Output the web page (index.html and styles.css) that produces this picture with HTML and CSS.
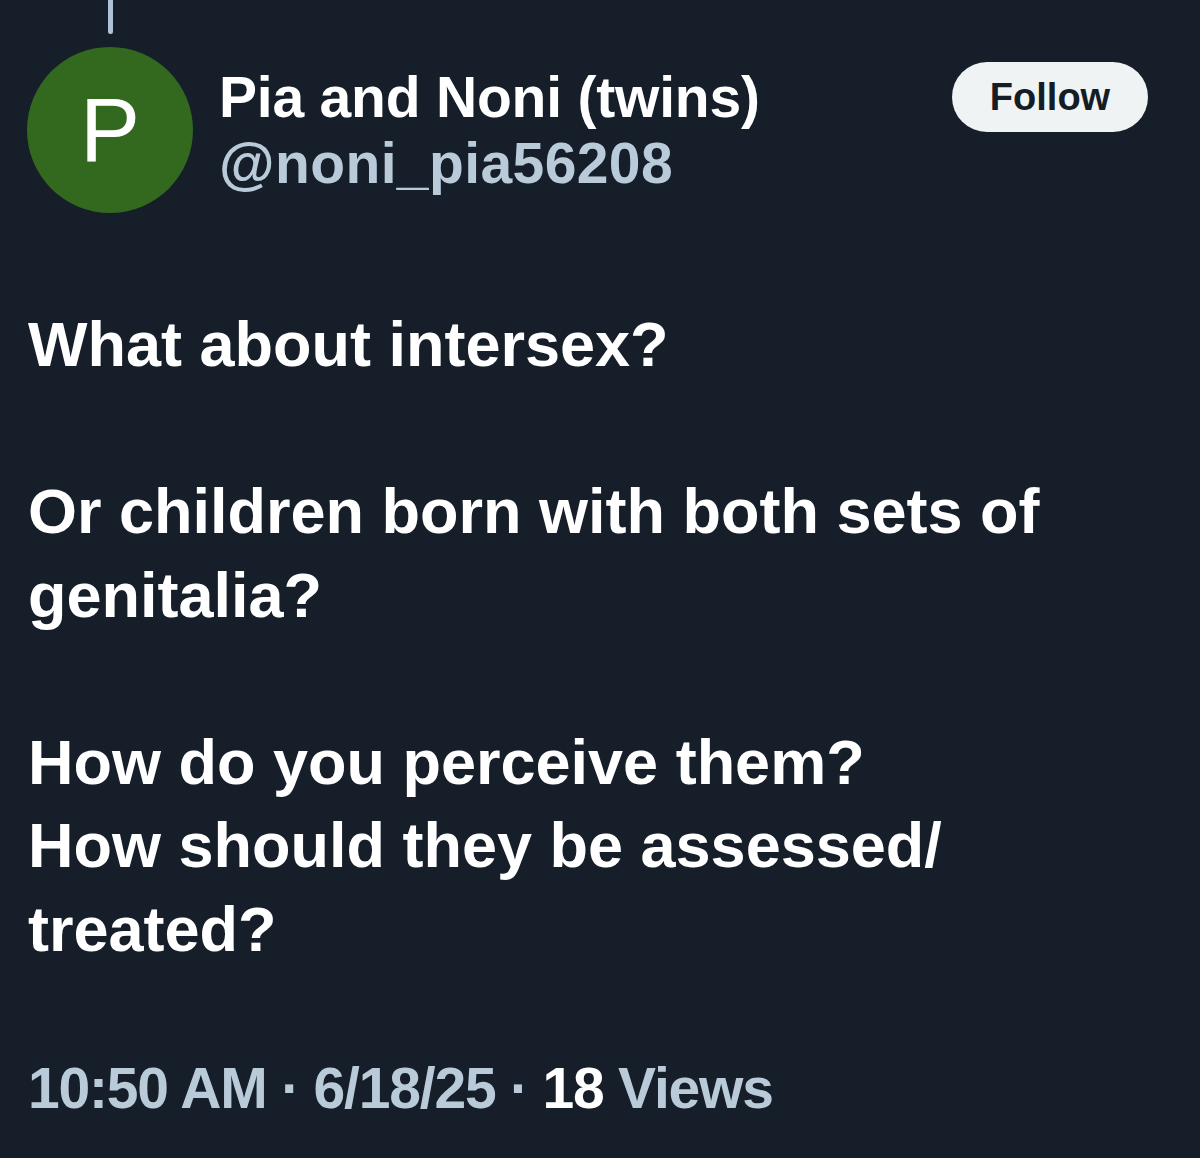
FILE: index.html
```html
<!DOCTYPE html>
<html lang="en">
<head>
<meta charset="utf-8">
<title>Post</title>
<link rel="stylesheet" href="styles.css">
</head>
<body>
<div class="post">
  <div class="thread-line"></div>
  <div class="header">
    <div class="avatar">P</div>
    <div class="names">
      <div class="name">Pia and Noni (twins)</div>
      <div class="handle">@noni_pia56208</div>
    </div>
    <button class="follow">Follow</button>
  </div>
  <div class="body">
    <p class="para">What about intersex?</p>
    <p class="para">Or children born with both sets of<br>genitalia?</p>
    <p class="para">How do you perceive them?<br>How should they be assessed/<br>treated?</p>
  </div>
  <div class="meta">10:50 AM · 6/18/25 · <span class="count">18</span> Views</div>
</div>
</body>
</html>
```
FILE: styles.css
```css
html, body {
  margin: 0;
  padding: 0;
  background: #161e29;
}
body {
  font-family: "Liberation Sans", Arial, sans-serif;
  width: 1200px;
  height: 1158px;
  overflow: hidden;
}
.post {
  display: flex;
  flex-direction: column;
}
.thread-line {
  margin-left: 108px;
  width: 5px;
  height: 34px;
  background: #afc3d6;
  border-radius: 0 0 2.5px 2.5px;
}
.header {
  display: flex;
  align-items: flex-start;
  padding-left: 27px;
  padding-right: 52px;
}
.avatar {
  margin-top: 13px;
  width: 166px;
  height: 166px;
  border-radius: 50%;
  background: #33691e;
  color: #ffffff;
  display: flex;
  align-items: center;
  justify-content: center;
  font-size: 90px;
  font-weight: 400;
  line-height: 1;
  flex-shrink: 0;
}
.names {
  margin-top: 30px;
  margin-left: 26px;
  flex: 1;
}
.name, .handle {
  font-size: 57px;
  font-weight: 700;
  line-height: 66px;
  white-space: nowrap;
}
.name { color: #ffffff; letter-spacing: -0.2px; }
.handle { color: #b9cad9; letter-spacing: 0.4px; }
.follow {
  margin-top: 28px;
  width: 196px;
  height: 70px;
  border: none;
  border-radius: 35px;
  background: #eff3f4;
  color: #141c26;
  font-family: "Liberation Sans", Arial, sans-serif;
  font-weight: 700;
  font-size: 38px;
  padding: 0;
}
.body {
  padding: 90px 0 0 28px;
  color: #ffffff;
  font-size: 63px;
  font-weight: 700;
  line-height: 83.5px;
}
.para {
  margin: 0 0 83.5px 0;
  white-space: nowrap;
}
.para:last-child {
  margin-bottom: 0;
}
.meta {
  margin-top: 84px;
  padding-left: 28px;
  font-size: 57px;
  font-weight: 700;
  line-height: 66px;
  letter-spacing: -1.2px;
  color: #b9cad9;
  white-space: nowrap;
}
.count {
  color: #ffffff;
}
```
